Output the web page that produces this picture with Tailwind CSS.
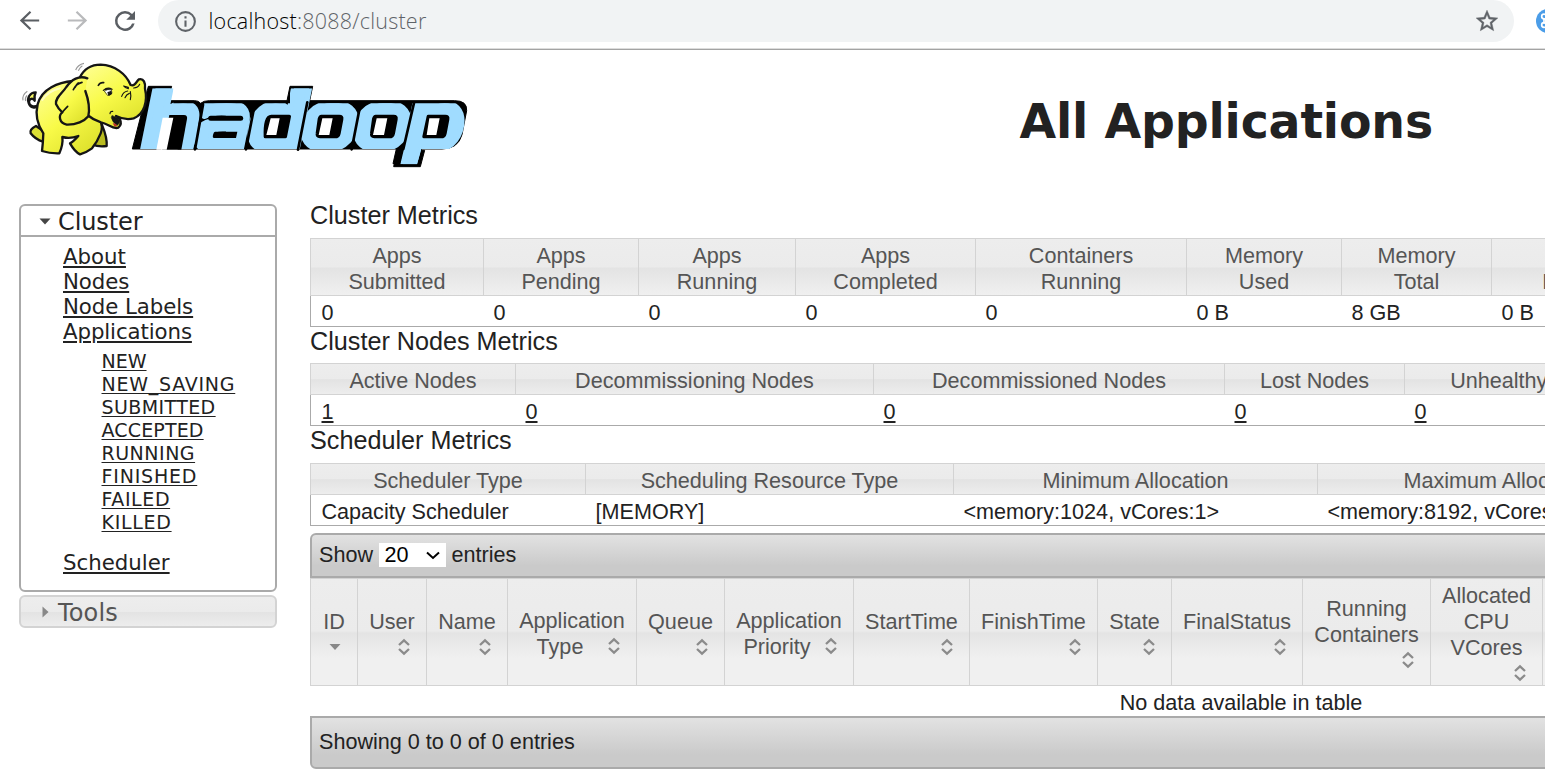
<!DOCTYPE html>
<html lang="en">
<head>
<meta charset="utf-8">
<title>All Applications</title>
<script src="https://cdn.jsdelivr.net/npm/@tailwindcss/browser@4"></script>
</head>
<body class="w-[1545px] h-[783px] overflow-hidden bg-white text-[#222] font-['Liberation_Sans',Arial,sans-serif] text-[21.6px] leading-[26px]">
<svg class="hidden">
  <symbol id="sort" viewBox="0 0 24 24"><path d="M7 10 12 5.400l5 4.600M7 14l5 4.600 5-4.600" fill="none" stroke="#8b8b8b" stroke-width="2.300"/></symbol>
</svg>

<header class="h-[50px] flex items-start border-b border-[#a3a3a3] shadow-[inset_0_-1px_0_#dcdcdc]">
  <svg class="w-[29px] h-[29px] ml-[14.500px] mt-[5.5px] shrink-0" viewBox="0 0 24 24" fill="#5a5e63"><path d="M20 11.100H7.530l5.940-5.690L12.200 4.100 4 12l8.200 7.900 1.270-1.310L7.530 12.900H20z"/></svg>
  <svg class="w-[29px] h-[29px] ml-[19px] mt-[5.5px] shrink-0" viewBox="0 0 24 24" fill="#b9babc"><path d="M4 11.100h12.470l-5.940-5.690L11.800 4.100 20 12l-8.200 7.900-1.270-1.310 5.940-5.690H4z"/></svg>
  <svg class="w-[30px] h-[30px] ml-[18px] mt-[5.5px] shrink-0" viewBox="0 0 24 24" fill="#5a5e63"><path d="M17.650 6.350A7.950 7.950 0 0 0 12 4a8 8 0 1 0 7.730 10h-2.080A6 6 0 1 1 12 6c1.660 0 3.140.69 4.220 1.780L13 11h7V4z"/></svg>
  <div class="ml-[18px] w-[1356px] h-[42px] shrink-0 rounded-full bg-[#f1f3f4] flex items-center pl-[15px] pr-[14px]">
    <svg class="w-[25px] h-[25px] shrink-0" viewBox="0 0 24 24" fill="#5f6368"><path d="M11 7h2v2h-2zm0 4h2v6h-2zm1-9a10 10 0 1 0 0 20 10 10 0 0 0 0-20zm0 18a8 8 0 1 1 0-16 8 8 0 0 1 0 16z"/></svg>
    <div class="ml-[11px] grow font-['Open_Sans','Noto_Sans',sans-serif] font-light text-[21.5px] leading-[28px] text-[#5f6368] tracking-[0.22px]"><span class="text-black">localhost</span>:8088/cluster</div>
    <svg class="w-[26px] h-[26px] shrink-0" viewBox="0 0 24 24" fill="#5f6368" stroke="#5f6368" stroke-width=".4"><path d="M22 9.240l-7.190-.62L12 2 9.190 8.630 2 9.240l5.460 4.730L5.820 21 12 17.270 18.180 21l-1.630-7.030L22 9.240zM12 15.400l-3.760 2.270 1-4.280-3.320-2.880 4.380-.38L12 6.100l1.710 4.040 4.380.38-3.320 2.880 1 4.280L12 15.400z"/></svg>
  </div>
  <svg class="w-[24px] h-[24px] ml-[22px] mt-[9px] shrink-0" viewBox="0 0 24 24"><circle cx="12" cy="12" r="12" fill="#4b9de8"/><g fill="none" stroke="#fff" stroke-width="1.700"><circle cx="8" cy="7.500" r="2.300"/><circle cx="8" cy="16" r="2.300"/><path d="M8 10h8v4H8z"/></g></svg>
</header>

<div class="flex h-[154px]">
  <svg class="w-[470px] h-[120px] ml-[10px] mt-[5px] shrink-0" viewBox="0 0 1410 360">
    <defs>
      <linearGradient id="skin" x1="0" y1="0" x2=".7" y2="1"><stop offset="0" stop-color="#ffff9c"/><stop offset=".55" stop-color="#f8fa48"/><stop offset="1" stop-color="#dfe22e"/></linearGradient>
      <clipPath id="word"><path d="M380 100h110v45h-110zM840 100h80v45h-80zM380 145h1000v137H380zM1182 282h52l-13 46h-50z"/></clipPath>
    </defs>
    <g fill="#000" stroke="#000" stroke-linejoin="round" stroke-width="3">
      <path d="M415 94h70l-13 43h82q12 0 18 8 8-8 26-8h233l9-43h68l-9 43h435q38 0 36 30l-14 72q-12 43-60 43h-61l-11 44h-75l10-44H503l19-100h-44l-24 100h-87z"/>
      <path d="M1161 286h83l-13 49h-80z"/>
    </g>
    <g clip-path="url(#word)">
      <text transform="scale(1.05 1)" x="373 527 678 829 979 1124" y="281" font-family="DejaVu Sans" font-weight="700" font-style="italic" font-size="245" fill="#a0dcff" stroke="#a0dcff" stroke-width="17" stroke-linejoin="round">hadoop</text>
    </g>
    <g fill="none" stroke="#000" stroke-width="8" stroke-linecap="round">
      <path d="M579 149l-24 134M734 149l-26 134M892 142l-28 142M1051 149l-26 134M1212 144l-32 138"/>
    </g>
    <g stroke-linejoin="round">
      <path d="M478 180l-22 104h58l17-92q2-12-9-12z" fill="#000"/>
      <path d="M458 188h32l-20 96h-31z" fill="#fff"/>
      <path d="M616 230h66l-4 19h-66q-5 0-3-9 2-10 7-10z" fill="#000"/>
      <path d="M602 190h90" stroke="#000" stroke-width="15" stroke-linecap="round"/>
      <g fill="#000" stroke="#000" stroke-width="10">
        <path d="M784 184h54l-12 61h-60q-2-61 18-61zM934 184h54q9 0 7 9l-8 42q-2 10-12 10h-45q-10 0-8-10l6-43q2-8 6-8zM1097 184h54q9 0 7 9l-8 42q-2 10-12 10h-45q-10 0-8-10l6-43q2-8 6-8zM1255 184h51q9 0 7 9l-8 42q-2 10-12 10h-51z"/>
      </g>
      <path d="M782 190h27l-10 50h-30zM937 190h31l-10 50h-32zM1100 190h32l-10 50h-33zM1258 190h31l-10 50h-29z" fill="#fff"/>
    </g>
    <g stroke="#151515" stroke-width="7" stroke-linejoin="round" stroke-linecap="round" fill="url(#skin)">
      <path d="M78 213C66 219 59 227 62 235C72 248 88 257 99 260L106 232z" fill="#dcdf35"/>
      <path d="M274 205C282 225 292 245 290 273Q265 276 248 269L268 225z" fill="#b9bc20"/>
      <path d="M86 150C72 158 58 154 57 141C57 130 69 128 74 137Q72 121 77 112C60 112 50 130 56 144C62 160 75 160 86 154z"/>
      <path d="M190 78C145 82 95 100 83 148C75 180 83 210 100 235Q99 265 96 288Q120 296 148 295Q160 268 157 246Q180 252 205 243Q190 260 180 265Q194 290 210 298Q230 292 246 280Q262 260 272 235Q280 215 270 194L250 90z"/>
      <path d="M209 68C222 42 246 29 272 29C315 31 348 56 362 90C377 96 378 79 387 73C401 69 407 84 405 101C414 140 402 178 371 190Q346 197 318 183L328 190Q338 207 325 218C308 224 295 206 273 202Q250 195 232 180L204 95z"/>
      <path d="M307 182L324 190Q334 200 322 211Q308 204 304 188z" fill="#151515" stroke-width="2"/>
      <path d="M308 205q11-2 14 8-9 5-14-8z" fill="#bb332b" stroke="none"/>
      <path d="M232 70C208 60 184 74 169 96C157 115 136 126 138 147Q145 162 157 172C145 181 147 204 170 209C198 210 224 198 235 184C240 160 234 130 226 108"/>
      <path d="M157 172q8-10 16-18M216 82q-18 4-26 22M205 84q-7 6-10 13" fill="none" stroke-width="5"/>
      <path d="M265 91q6-10 16-8" fill="none" stroke-width="5"/>
      <path d="M284 108q10-8 20-3l2 10-12 6z" fill="#fff" stroke-width="2"/>
      <path d="M280 106q13-11 26-3M294 113l9-3 1 6-7 5z" stroke-width="3.500" fill="#151515"/>
      <path d="M335 124q5-14 18-16M345 128q4-10 13-13M361 110q3 14 0 24M341 93l14 4v4q-9-1-14-8zM371 99q13 0 18-11M300 176q1-8 8-7" stroke-width="3.500" fill="none"/>
      <path d="M97 135q18-27 53-35" fill="none" stroke="#fffde0" stroke-width="6" opacity=".7"/>
    </g>
    <path d="M197 45q6-16 25-20M205 47q4-10 12-15M39 136q-3-16 13-27M47 138q-3-9 4-17" fill="none" stroke="#999" stroke-width="3.500"/>
  </svg>
  <h1 class="ml-[539.5px] mt-[43px] font-['DejaVu_Sans',Verdana,sans-serif] font-bold text-[47.4px] leading-[58px] tracking-[-0.17px] whitespace-nowrap">All Applications</h1>
</div>

<main class="flex items-start">
  <nav class="w-[258px] ml-[19px] shrink-0 font-['DejaVu_Sans',Verdana,sans-serif]">
    <section class="h-[388px] border-2 border-[#aaa] rounded-[6px]">
      <h3 class="h-[31px] border-b-2 border-[#aaa] flex items-center text-[24px] leading-[29px] text-[#212121]">
        <svg class="w-[12px] h-[7px] ml-[17.500px] mr-[7.500px] mt-px" viewBox="0 0 12 7"><path d="M.5.500h11L6 6.500z" fill="#454545"/></svg><span class="mt-[4px] tracking-[-0.1px]">Cluster</span>
      </h3>
      <ul class="pl-[42px] pt-[7px] text-[21.3px] leading-[25px] underline decoration-2 underline-offset-[2px]">
        <li>About</li>
        <li class="tracking-[-0.1px]">Nodes</li>
        <li class="tracking-[-0.07px]">Node Labels</li>
        <li class="tracking-[-0.1px]">Applications</li>
      </ul>
      <ul class="pl-[80.5px] pt-[6px] text-[19px] leading-[23px] underline decoration-1 underline-offset-[2px]">
        <li>NEW</li>
        <li class="tracking-[0.75px]">NEW_SAVING</li>
        <li class="tracking-[0.4px]">SUBMITTED</li>
        <li class="tracking-[0.15px]">ACCEPTED</li>
        <li class="tracking-[0.5px]">RUNNING</li>
        <li class="tracking-[0.8px]">FINISHED</li>
        <li class="tracking-[0.6px]">FAILED</li>
        <li class="tracking-[0.7px]">KILLED</li>
      </ul>
      <ul class="pl-[42px] pt-[16px] text-[21.3px] leading-[25px] underline decoration-2 underline-offset-[2px]"><li>Scheduler</li></ul>
    </section>
    <h3 class="mt-[3px] h-[33px] border-2 border-[#d3d3d3] rounded-[6px] flex items-center text-[24px] leading-[29px] text-[#555] bg-[linear-gradient(#ededed,#ebebeb_50%,#e3e3e3_52%,#ededed)]">
      <svg class="w-[7px] h-[12px] ml-[21px] mr-[9px] mt-px" viewBox="0 0 7 12"><path d="M.5.500v11L6.500 6z" fill="#888"/></svg><span class="mt-[4px] tracking-[0.15px]">Tools</span>
    </h3>
  </nav>

  <div class="w-[1862px] ml-[33px] shrink-0">
    <h2 class="h-[34px] text-[25.2px] leading-[22px]">Cluster Metrics</h2>
    <div class="h-[89px] border-l border-b border-[#aaa]">
      <div class="-ml-px h-[58px] grid grid-cols-[173px_155px_157px_180px_211px_155px_150px_194px_1fr] border-y border-[#d3d3d3] text-center text-[#555] bg-[linear-gradient(#ededed,#ebebeb_50%,#e3e3e3_52%,#f0f0f0)] *:border-l *:border-[#d3d3d3] *:pt-[4px]">
        <div>Apps<br>Submitted</div><div>Apps<br>Pending</div><div>Apps<br>Running</div><div>Apps<br>Completed</div><div>Containers<br>Running</div><div>Memory<br>Used</div><div>Memory<br>Total</div><div>Memory<br>Reserved</div><div></div>
      </div>
      <div class="h-[30px] grid grid-cols-[172px_155px_157px_180px_211px_155px_150px_194px_1fr] leading-[34px] *:pl-[10.500px]">
        <div>0</div><div>0</div><div>0</div><div>0</div><div>0</div><div>0 B</div><div>8 GB</div><div>0 B</div>
      </div>
    </div>
    <h2 class="h-[36px] pt-[2px] text-[25.2px] leading-[24px]">Cluster Nodes Metrics</h2>
    <div class="h-[63px] border-l border-b border-[#aaa]">
      <div class="-ml-px h-[32px] grid grid-cols-[205px_358px_351px_180px_257px_1fr] border-y border-[#d3d3d3] text-center text-[#555] bg-[linear-gradient(#ededed,#ebebeb_50%,#e3e3e3_52%,#ededed)] *:border-l *:border-[#d3d3d3] *:h-[30px] leading-[34px]">
        <div>Active Nodes</div><div>Decommissioning Nodes</div><div>Decommissioned Nodes</div><div>Lost Nodes</div><div>Unhealthy Nodes</div><div></div>
      </div>
      <div class="h-[30px] grid grid-cols-[204px_358px_351px_180px_257px_1fr] leading-[34px] *:pl-[10.500px] underline decoration-2 underline-offset-[2px]">
        <div>1</div><div>0</div><div>0</div><div>0</div><div>0</div>
      </div>
    </div>
    <h2 class="h-[37px] pt-[2px] text-[25.2px] leading-[24px]">Scheduler Metrics</h2>
    <div class="h-[63px] border-l border-b border-[#aaa]">
      <div class="-ml-px h-[32px] grid grid-cols-[275px_368px_364px_364px_1fr] border-y border-[#d3d3d3] text-center text-[#555] bg-[linear-gradient(#ededed,#ebebeb_50%,#e3e3e3_52%,#ededed)] *:border-l *:border-[#d3d3d3] *:h-[30px] leading-[34px]">
        <div>Scheduler Type</div><div>Scheduling Resource Type</div><div>Minimum Allocation</div><div>Maximum Allocation</div><div></div>
      </div>
      <div class="h-[30px] grid grid-cols-[274px_368px_364px_364px_1fr] leading-[34px] *:pl-[10.500px]">
        <div>Capacity Scheduler</div><div>[MEMORY]</div><div>&lt;memory:1024, vCores:1&gt;</div><div>&lt;memory:8192, vCores:4&gt;</div>
      </div>
    </div>

    <div class="mt-[7px] h-[45px] border-2 border-[#aaa] rounded-t-[6px] bg-[linear-gradient(#e2e2e2,#cacaca_75%,#cacaca)] flex items-start pl-[7px] pt-[7px]">
      <span>Show</span>
      <div class="ml-[5.500px] mt-px w-[67px] h-[24px] bg-white text-black flex items-center pl-[6px] pr-[6px] justify-between"><span>20</span><svg class="w-[14px] h-[9px]" viewBox="0 0 14 9"><path d="M1 1.500l6 5.500 6-5.500" fill="none" stroke="#000" stroke-width="2"/></svg></div>
      <span class="ml-[6px]">entries</span>
    </div>
    <div class="h-[108px] grid grid-cols-[47px_69px_81px_129px_88px_129px_116px_128px_74px_131px_128px_112px_1fr] border-y border-[#d3d3d3] text-center text-[#555] bg-[linear-gradient(#ededed,#ebebeb_49%,#e4e4e4_51%,#f0f0f0_75%,#f0f0f0)] *:border-l *:border-[#d3d3d3] *:flex *:items-center *:px-[11px] *:pt-[3px]">
      <div><div class="grow flow-root -mx-px">ID<svg class="float-right w-[24px] h-[24px]" viewBox="0 0 24 24"><path d="M6.500 9h11L12 15z" fill="#888"/></svg></div></div>
      <div><div class="grow flow-root -mx-px">User<svg class="float-right w-[24px] h-[24px]"><use href="#sort"/></svg></div></div>
      <div><div class="grow flow-root -mx-px">Name<svg class="float-right w-[24px] h-[24px]"><use href="#sort"/></svg></div></div>
      <div><div class="grow flow-root -mx-px">Application<br>Type<svg class="float-right w-[24px] h-[24px]"><use href="#sort"/></svg></div></div>
      <div><div class="grow flow-root -mx-px">Queue<svg class="float-right w-[24px] h-[24px]"><use href="#sort"/></svg></div></div>
      <div><div class="grow flow-root -mx-px">Application<br>Priority<svg class="float-right w-[24px] h-[24px]"><use href="#sort"/></svg></div></div>
      <div><div class="grow flow-root -mx-px">StartTime<svg class="float-right w-[24px] h-[24px]"><use href="#sort"/></svg></div></div>
      <div><div class="grow flow-root -mx-px">FinishTime<svg class="float-right w-[24px] h-[24px]"><use href="#sort"/></svg></div></div>
      <div><div class="grow flow-root -mx-px">State<svg class="float-right w-[24px] h-[24px]"><use href="#sort"/></svg></div></div>
      <div><div class="grow flow-root -mx-px">FinalStatus<svg class="float-right w-[24px] h-[24px]"><use href="#sort"/></svg></div></div>
      <div><div class="grow flow-root -mx-px">Running<br>Containers<svg class="float-right w-[24px] h-[24px]"><use href="#sort"/></svg></div></div>
      <div><div class="grow flow-root -mx-px">Allocated<br>CPU<br>VCores<svg class="float-right w-[24px] h-[24px]"><use href="#sort"/></svg></div></div>
      <div></div>
    </div>
    <div class="h-[30px] text-center leading-[34px]">No data available in table</div>
    <div class="h-[53px] border-2 border-[#aaa] rounded-b-[6px] bg-[linear-gradient(#e2e2e2,#cacaca_75%,#cacaca)] pl-[7px] leading-[48px]">Showing 0 to 0 of 0 entries</div>
  </div>
</main>
</body>
</html>
